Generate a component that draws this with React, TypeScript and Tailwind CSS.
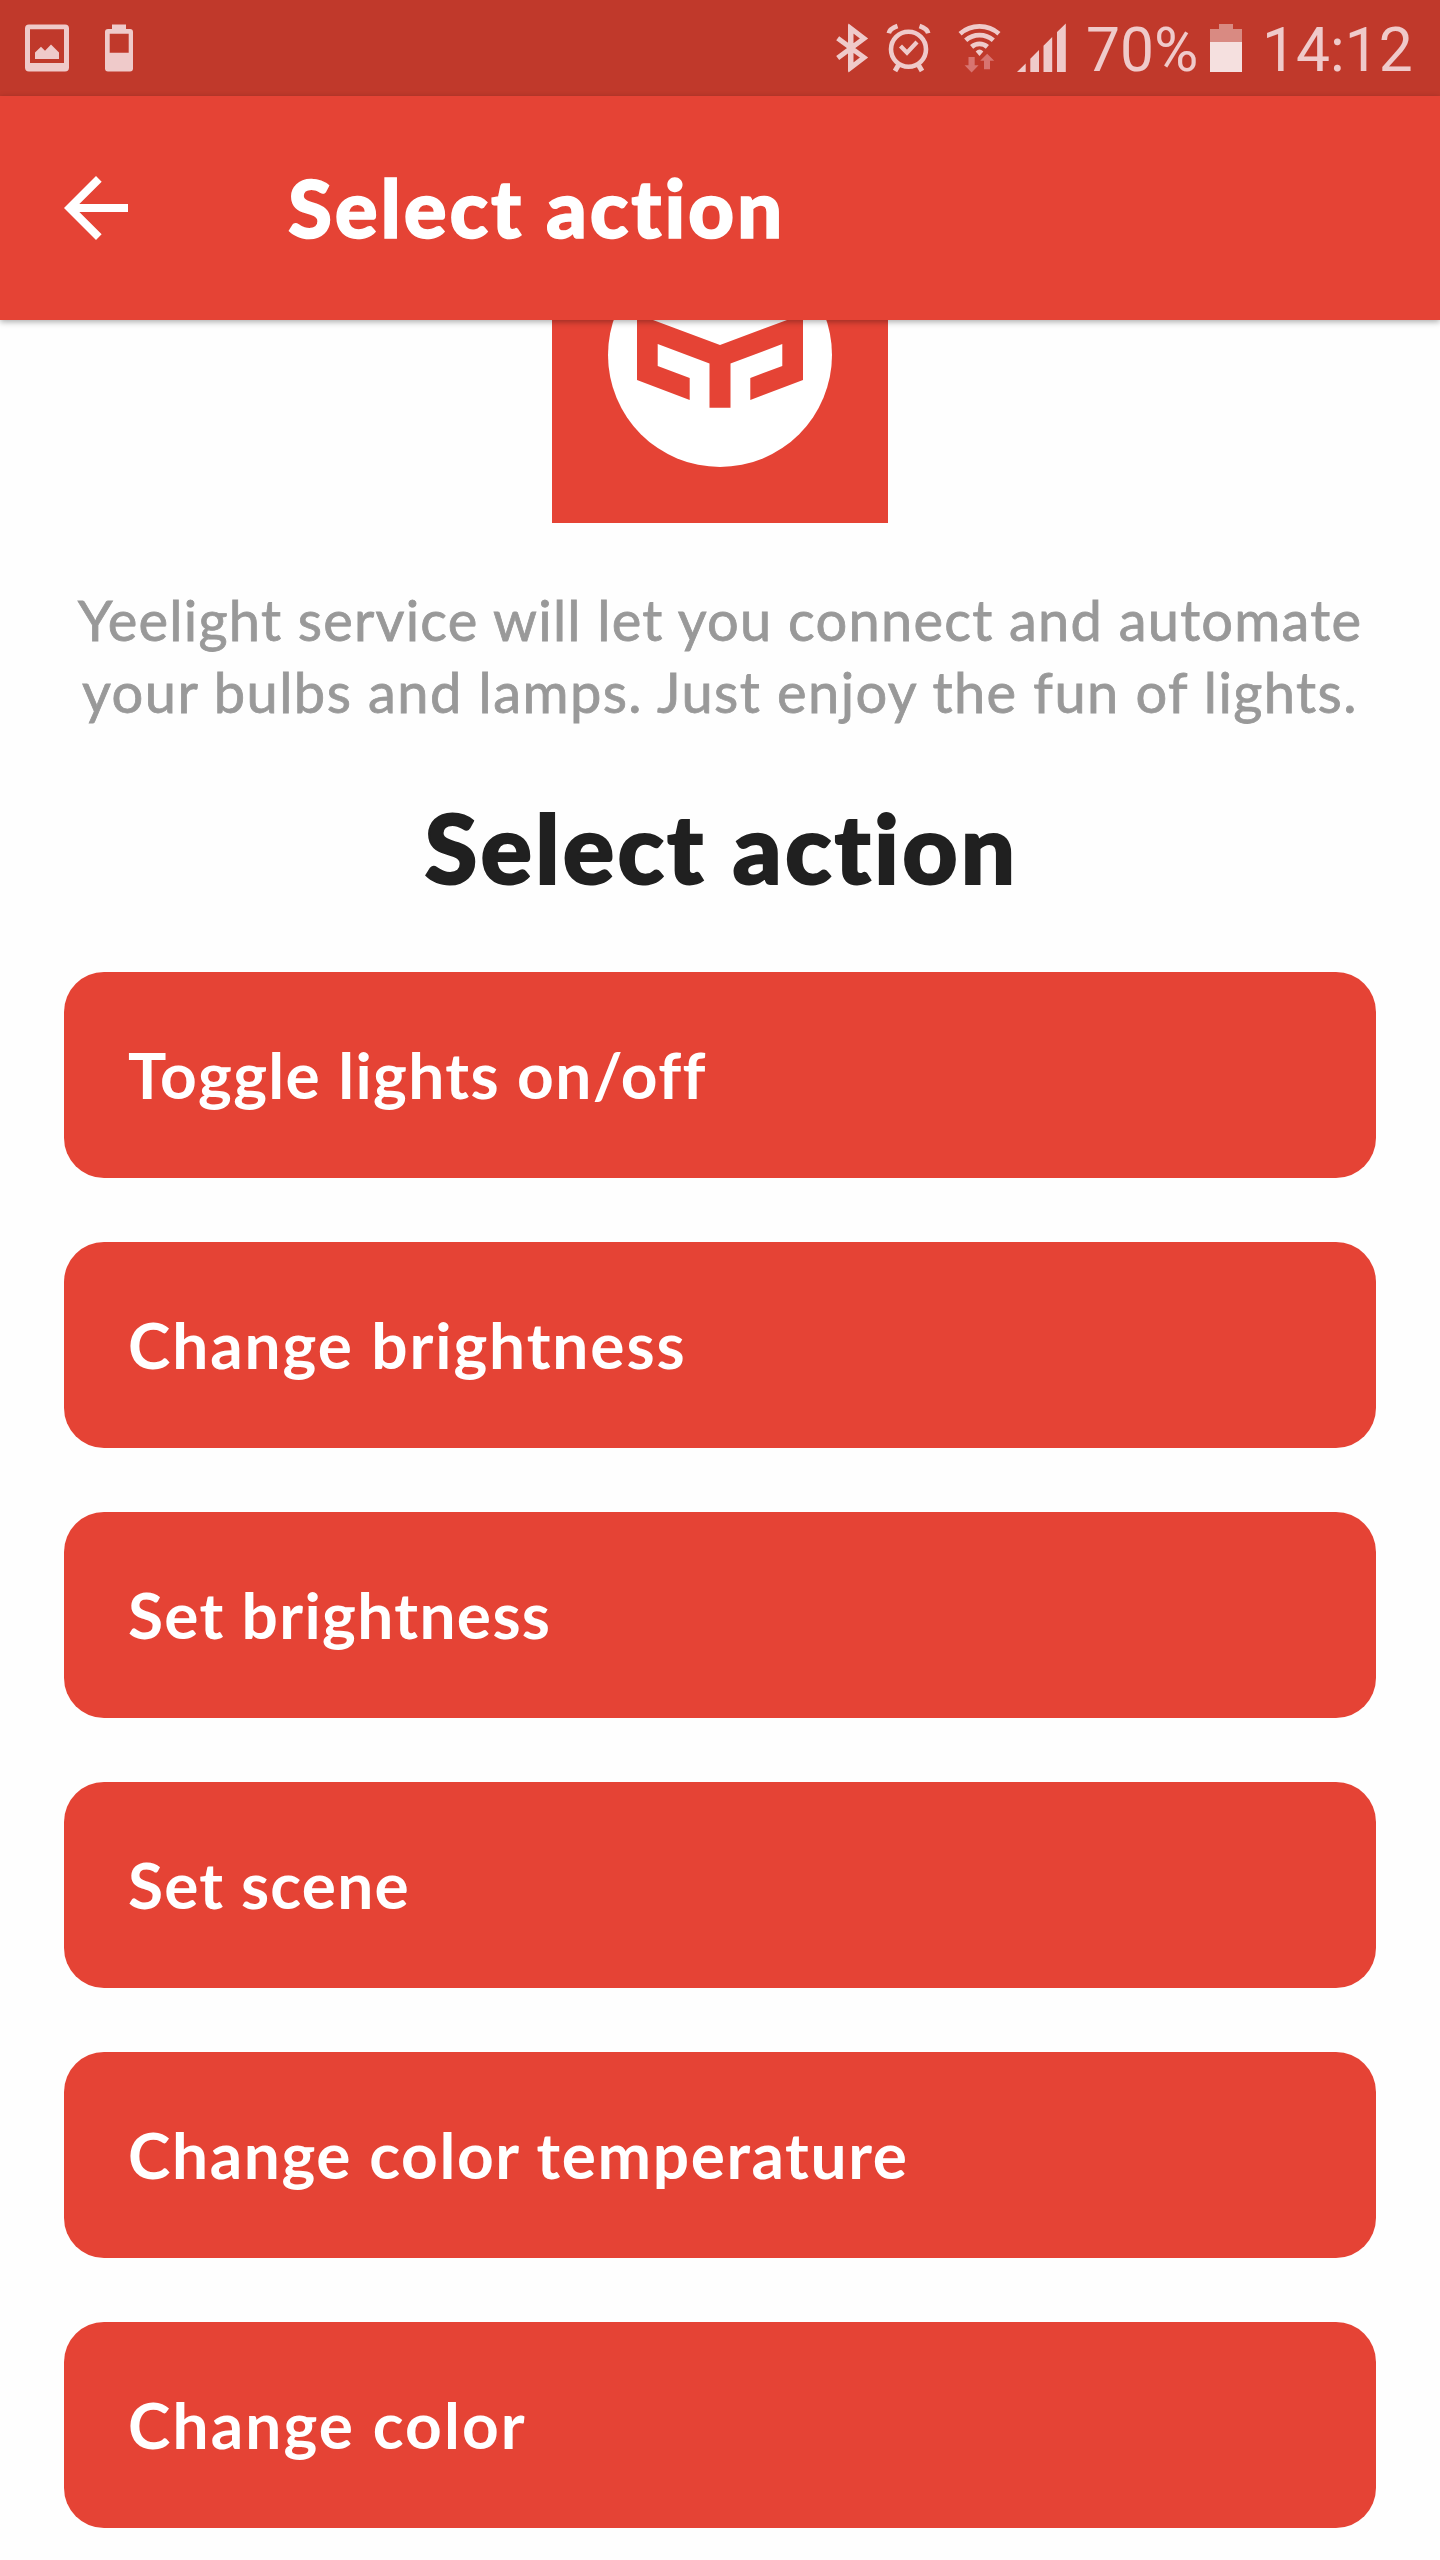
interface Action {
  label: string;
  className: string;
}

const actions: Action[] = [
  { label: 'Toggle lights on/off', className: 'tracking-[1.4px]' },
  { label: 'Change brightness', className: 'tracking-[1.9px]' },
  { label: 'Set brightness', className: 'tracking-[1.35px]' },
  { label: 'Set scene', className: 'tracking-[1.2px]' },
  { label: 'Change color temperature', className: 'tracking-[1.6px]' },
  { label: 'Change color', className: 'tracking-[2.1px]' },
];

function NotificationIcons() {
  return (
    <svg width="140" height="96" viewBox="0 0 140 96" fill="#efcaca">
      <path
        fillRule="evenodd"
        d="M29 24.5h36a4 4 0 0 1 4 4v39a4 4 0 0 1-4 4H29a4 4 0 0 1-4-4v-39a4 4 0 0 1 4-4zM30 29.3V63h34V29.3z"
      />
      <path d="M35 59v-6.5l6-5.7 4 4 6-6.3 8 8V59z" />
      <path
        fillRule="evenodd"
        d="M112 24.5h14V29h4a3 3 0 0 1 3 3v36.500a3 3 0 0 1-3 3h-22a3 3 0 0 1-3-3V32a3 3 0 0 1 3-3h4zM109.700 33.700v19h19v-19z"
      />
    </svg>
  );
}

function ConnectionIcons() {
  return (
    <svg width="246" height="96" viewBox="830 0 246 96" fill="none" stroke="#efcaca" strokeWidth="5">
      {/* bluetooth */}
      <path d="M837.700 38.200L864 57.500 851 67.500V28.500L864 38.500 837.700 58" />
      <path d="M848 24v48l4-3V27z" fill="#efcaca" stroke="none" />
      {/* alarm */}
      <circle cx="908.500" cy="49.300" r="17.500" strokeWidth="4.600" />
      <path d="M900.500 46l6.500 6.800 10-10.800" strokeWidth="4.200" />
      <path d="M888.800 33.200q1-4.500 8.700-7.200M928.200 33.200q-1-4.500-8.700-7.200" strokeWidth="4.600" />
      <path d="M898.500 65l-3.500 6M918.500 65l3.500 6" />
      {/* wifi */}
      <path
        strokeWidth="4.800"
        d="M960.100 33.700a29.500 29.500 0 0 1 38.800 0M965.700 40.200a21 21 0 0 1 27.600 0M971.600 46.900a12 12 0 0 1 15.800 0"
      />
      <path d="M979.500 56l-3.800-4.600q3.800-4 7.600 0z" fill="#efcaca" stroke="none" />
      <path
        d="M968.500 57h6.200v8.300h3.900l-7 7.200-7-7.200h3.900zM984 69.200v-8.400h-3.800l7-7 7 7H990v8.400z"
        fill="#d87470"
        stroke="none"
      />
      {/* signal */}
      <path
        d="M1017 72l8.700-8.500V72zM1030.300 72V58.700l8.700-8.700v22zM1043.500 72V45.700l8.700-8.700v35zM1057 72V32l8.800-8.500V72z"
        fill="#efcaca"
        stroke="none"
      />
    </svg>
  );
}

function BatteryIcon() {
  return (
    <svg width="32" height="96" viewBox="0 0 32 96">
      <path d="M0 29h9v-5h14v5h9v13H0z" fill="#d98a82" />
      <path d="M0 42h32v30H0z" fill="#f5e0df" />
    </svg>
  );
}

function StatusBar() {
  return (
    <div className="flex h-24 items-start justify-between bg-[#c0392b] font-[Roboto,sans-serif] text-[60.500px] leading-[101px] text-[#efcaca]">
      <NotificationIcons />
      <div className="flex items-start">
        <ConnectionIcons />
        <span className="ml-[10px] w-[124px] whitespace-nowrap">70%</span>
        <BatteryIcon />
        <span className="ml-[20px] w-[178px] whitespace-nowrap">14:12</span>
      </div>
    </div>
  );
}

function ServiceLogo() {
  return (
    <svg className="block shrink-0" width="336" height="336" viewBox="552 187 336 336">
      <path d="M552 187h336v336H552z" fill="#e54335" />
      <circle cx="720" cy="355" r="112" fill="#fff" />
      <path
        d="M637 290l16 30 67 25 67-25 16-30v90l-52.700 20v-22l32-12v-22L730.500 363.500V407.700h-21V363.500L657.700 344v22l32 12v22L637 380z"
        fill="#e54335"
      />
    </svg>
  );
}

export default function App() {
  return (
    <div className="flex h-[2560px] w-[1440px] flex-col overflow-hidden bg-[#fefefe] font-[Lato,sans-serif]">
      <StatusBar />
      <header className="relative z-10 flex h-56 shrink-0 items-center bg-[#e54335] pl-12 text-white shadow-[0_2px_6px_rgba(0,0,0,0.32)]">
        <svg width="96" height="96" viewBox="0 0 24 24" fill="currentColor">
          <path d="M20 11H7.830l5.590-5.590L12 4l-8 8 8 8 1.410-1.410L7.830 13H20v-2z" />
        </svg>
        <h1 className="mb-[3px] ml-36 text-[80px] leading-none font-black tracking-[2.85px] [-webkit-text-stroke:1.5px_currentColor]">
          Select action
        </h1>
      </header>
      <main className="flex flex-col items-center">
        <div className="-mt-[133px]">
          <ServiceLogo />
        </div>
        <p className="mt-[61px] text-center text-[56px] leading-[72px] whitespace-nowrap text-[#999] [-webkit-text-stroke:0.8px_currentColor]">
          <span className="block tracking-[1.22px]">Yeelight service will let you connect and automate</span>
          <span className="block tracking-[1.42px]">your bulbs and lamps. Just enjoy the fun of lights.</span>
        </p>
        <h2 className="mt-[71px] pl-[3px] text-[96px] leading-[96px] font-black tracking-[3.2px] text-[#202020] [-webkit-text-stroke:2px_currentColor]">
          Select action
        </h2>
        <ul className="mt-[77px] flex w-full flex-col gap-16 px-16">
          {actions.map(({ label, className }) => (
            <li key={label}>
              <button
                type="button"
                className="flex h-[206px] w-full items-center rounded-[40px] bg-[#e54335] px-16 text-left text-[64px] font-bold text-white"
              >
                <span className={className}>{label}</span>
              </button>
            </li>
          ))}
        </ul>
      </main>
    </div>
  );
}
